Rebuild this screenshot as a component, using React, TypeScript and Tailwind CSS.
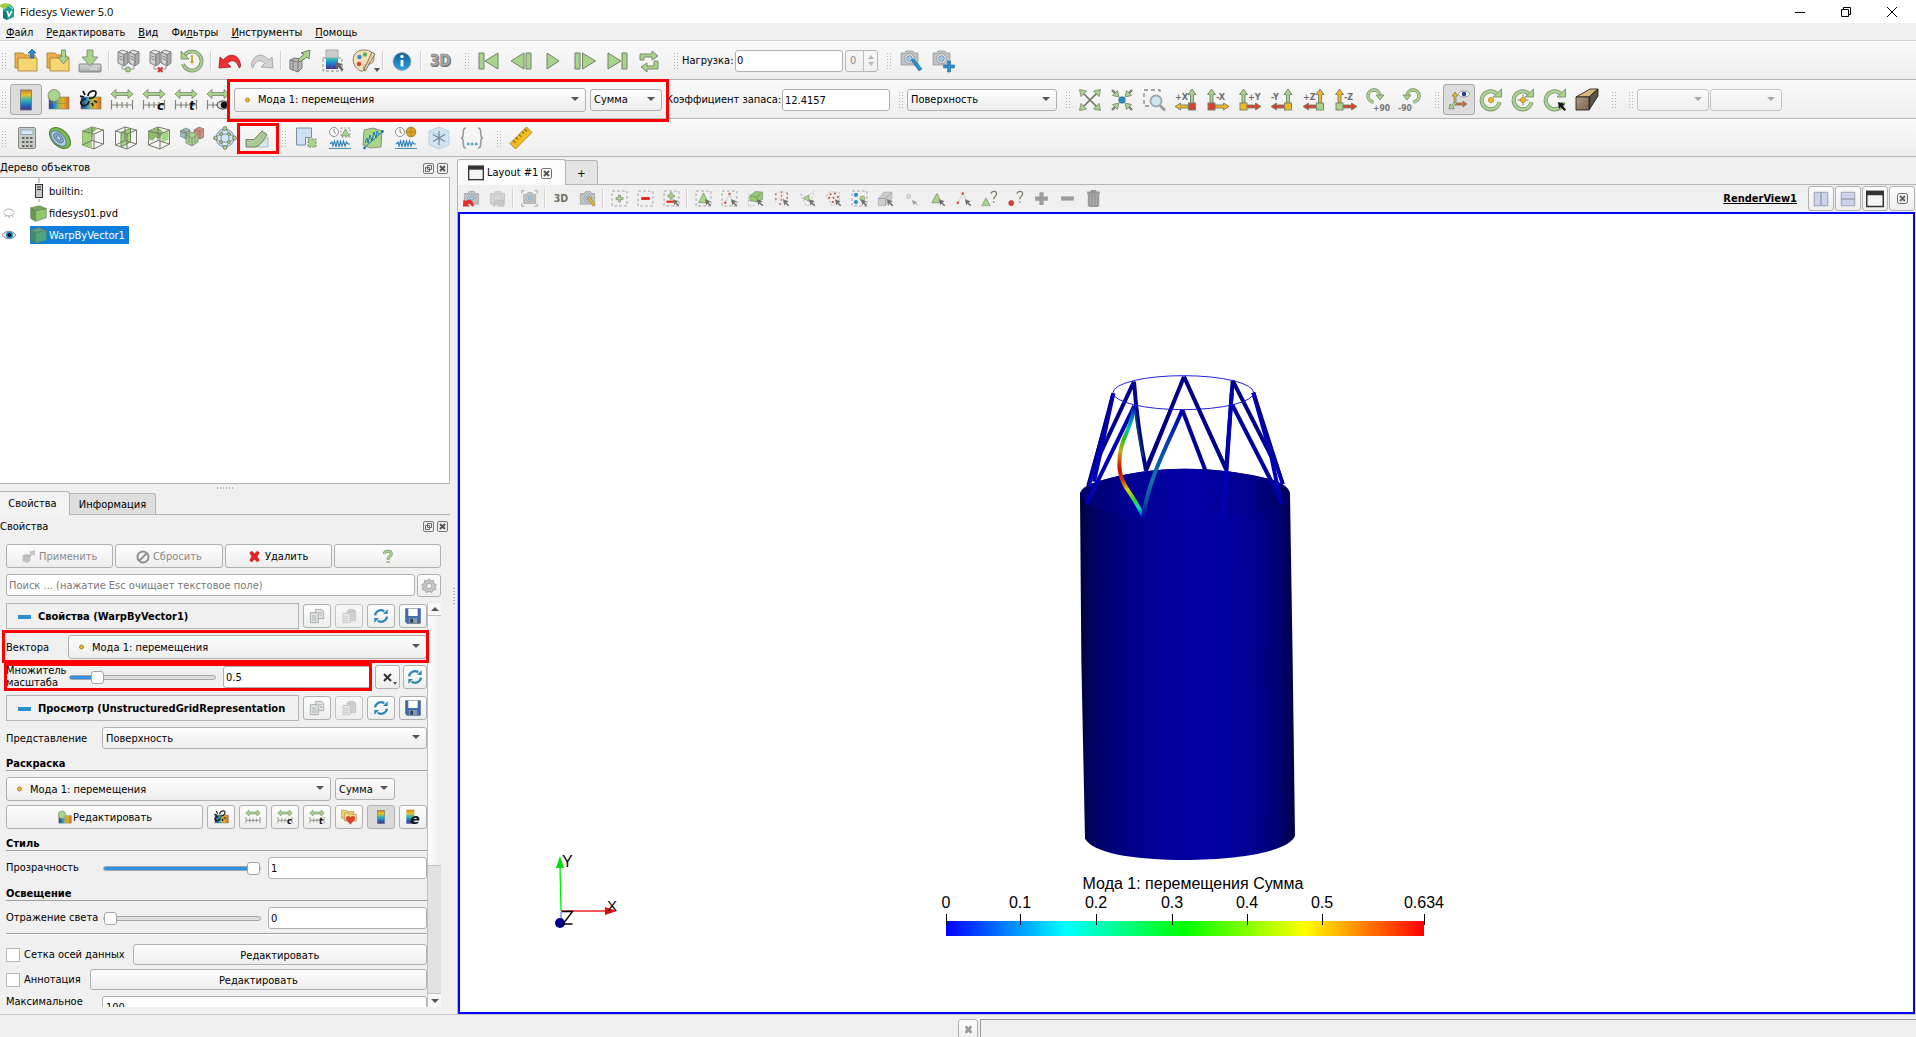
import React from "react";

const G = "#a8d48c";
const S = "#75806a";
const Y = "#f3b61f";
const R = "#d8412f";
const B = "#2d8fc9";

/* ---------- shared drawing pieces ---------- */

const RainbowDefs = () => (
  <svg className="absolute h-0 w-0" aria-hidden="true">
    <defs>
      <linearGradient id="rbV" x1="0" y1="0" x2="0" y2="1">
        <stop offset="0" stopColor="#d97f1e" />
        <stop offset="0.25" stopColor="#e6c22e" />
        <stop offset="0.5" stopColor="#35b8b4" />
        <stop offset="0.75" stopColor="#1d6fc0" />
        <stop offset="1" stopColor="#4a2c8c" />
      </linearGradient>
      <linearGradient id="rbCool" x1="0" y1="0" x2="0" y2="1">
        <stop offset="0" stopColor="#35c8b4" />
        <stop offset="0.5" stopColor="#1d7fd0" />
        <stop offset="1" stopColor="#4a2c8c" />
      </linearGradient>
      <linearGradient id="rbH" x1="0" y1="0" x2="1" y2="0">
        <stop offset="0" stopColor="#3b2d94" />
        <stop offset="0.3" stopColor="#1c9ac6" />
        <stop offset="0.6" stopColor="#e6c52e" />
        <stop offset="1" stopColor="#dd6a1e" />
      </linearGradient>
      <linearGradient id="metal" x1="0" y1="0" x2="0" y2="1">
        <stop offset="0" stopColor="#d8dadb" />
        <stop offset="1" stopColor="#a5a7a8" />
      </linearGradient>
      <linearGradient id="info" x1="0" y1="0" x2="0" y2="1">
        <stop offset="0" stopColor="#0f5f9c" />
        <stop offset="1" stopColor="#2ba3e0" />
      </linearGradient>
      <linearGradient id="wood" x1="0" y1="0" x2="1" y2="1">
        <stop offset="0" stopColor="#b39a80" />
        <stop offset="1" stopColor="#7d6450" />
      </linearGradient>
    </defs>
  </svg>
);

const Camera = ({ dim = false }: { dim?: boolean }) => (
  <g opacity={dim ? 0.6 : 1}>
    <path d="M2 4h4l1-2h7l1 2h4v12H2z" fill="#bfc1c3" stroke="#999c9e" strokeWidth="0.8" />
    <circle cx="10.500" cy="9.500" r="4.800" fill="#e8eaeb" stroke="#8a8e90" strokeWidth="0.8" />
    <circle cx="10.500" cy="9.500" r="2.800" fill={dim ? "#d5d5d5" : "#a3cde6"} stroke="#58879f" strokeWidth="0.8" />
  </g>
);

const BigCamera = ({ dim = false }: { dim?: boolean }) => (
  <g opacity={dim ? 0.6 : 1}>
    <path d="M2 5h5l2-3h7l2 3h4v15H2z" fill="#bfc1c3" stroke="#999c9e" />
    <circle cx="12.500" cy="11.500" r="5.500" fill="#e8eaeb" stroke="#8a8e90" />
    <circle cx="12.500" cy="11.500" r="3.200" fill={dim ? "#d5d5d5" : "#a3cde6"} stroke={dim ? "#999" : "#58879f"} />
  </g>
);

const Server = ({ x }: { x: number }) => (
  <g transform={`translate(${x} 0)`} stroke="#777" strokeWidth="0.9">
    <path d="M1 3l6 2.500V17l-6-3z" fill="#cfd1d2" />
    <path d="M7 5.500L11 3v11l-4 3z" fill="#a9abac" />
    <path d="M1 3l4-2 6 2-4 2.500z" fill="#e4e5e6" />
    <path d="M2.200 7l3.500 1.500M2.200 9.500l3.500 1.500" fill="none" />
  </g>
);

const WireCube = ({ children }: { children?: React.ReactNode }) => (
  <g strokeLinejoin="round">
    <path d="M1.500 5L11 1l11.500 3v14L13 23 1.500 19z" fill="#f4f4f2" stroke="#77776a" />
    {children}
    <path d="M1.500 5L13 8l9.500-4M13 8v15M11 1v13.500L1.500 19M11 14.500l11.500 3.500" fill="none" stroke="#77776a" />
  </g>
);

const SolidCube = ({ front, side, top }: { front: string; side: string; top: string }) => (
  <g stroke="#63805a" strokeWidth="0.9" strokeLinejoin="round">
    <path d="M1 4l7 4v15l-7-4z" fill={side} />
    <path d="M8 8l15-3v13L8 23z" fill={front} />
    <path d="M1 4l12-3 10 4-15 3z" fill={top} />
  </g>
);

const Ruler = ({ mark }: { mark?: string }) => (
  <g>
    <path d="M1 6l5-4.500v3h12v-3L23 6l-5 4.500v-3H6v3z" fill={G} stroke={S} strokeWidth="0.8" />
    <path d="M1.500 12v9.500M22.500 12v9.500M1.500 17h21M7 14v6M12 14v6M17 14v6" stroke="#85857a" strokeWidth="1.200" fill="none" />
    {mark && (
      <text x="15" y="22" fontSize="12" fontWeight="bold" fontStyle="italic" fill="#111" fontFamily="DejaVu Sans">
        {mark}
      </text>
    )}
  </g>
);

const ColorMap = () => (
  <g>
    <rect x="3" y="9" width="20" height="12" fill="url(#rbH)" stroke="#777" strokeWidth="0.6" />
    <path d="M3 15c6-1 13 2 20-1M15 9v12" stroke="#8a7d45" fill="none" strokeWidth="0.6" />
  </g>
);

const DashBox = () => <rect x="1.500" y="1.500" width="21" height="21" fill="none" stroke="#999" strokeWidth="1.200" strokeDasharray="4 3" />;
const Pick = () => <path d="M14 13l8 3-3 1.500 4 4-1.500 1.500-4-4L16 22z" fill="#6e6e6e" />;

const AxisIcon = ({ label, left, up, side, sq }: { label: string; left: boolean; up: string; side: string; sq: string }) => (
  <g strokeWidth="0.9" stroke={S}>
    {left ? (
      <>
        <path d="M18 1l4 5.500h-2.500V15h-3V6.500H14z" fill={up} />
        <path d="M1 18.500L6.500 15v2H14v3H6.500v2z" fill={side} />
        <rect x="14.500" y="15" width="7" height="7" fill={sq} />
      </>
    ) : (
      <>
        <path d="M5.500 1l4 5.500H7V15H4V6.500H1.500z" fill={up} />
        <path d="M23 18.500L17.500 15v2H9v3h8.500v2z" fill={side} />
        <rect x="2" y="15" width="7" height="7" fill={sq} />
      </>
    )}
    <text x={left ? 1 : 10} y="11.500" fontSize="9" fontWeight="bold" stroke="none" fill="#6d6d6d" fontFamily="DejaVu Sans Condensed">
      {label}
    </text>
  </g>
);

const RotateFull = () => (
  <g>
    <path d="M20.500 14a9 9 0 1 1-3-8.500" fill="none" stroke={S} strokeWidth="4" />
    <path d="M14 9h8.500V1z" fill={G} stroke={S} strokeWidth="0.8" />
    <path d="M20.500 14a9 9 0 1 1-3-8.500" fill="none" stroke={G} strokeWidth="2.600" />
  </g>
);

const Waves = () => (
  <g>
    <path d="M2 18l2-2 1 4 1.500-5 1.500 6 1.500-7 1.500 7 1.500-6 1.500 5 1.500-5 1.500 5 1.500-4 1.500 2h2" fill="none" stroke="#2b7fb5" strokeWidth="1.100" />
    <path d="M1 22.500h22" stroke="#4d90b8" />
    <circle cx="6" cy="6" r="4.500" fill="#fff" stroke="#8a9297" />
    <path d="M6 3v3l2 1.500" fill="none" stroke="#777" />
  </g>
);

const Heads = ({ d, fill = G }: { d: string; fill?: string }) => <path d={d} fill={fill} stroke={S} strokeWidth="0.8" />;

const ICONS: Record<string, React.ReactNode> = {
  treeCube: <SolidCube front="#8fc868" side="#6b9450" top="#79a85b" />,
  treeCubeSel: <SolidCube front="#4fa583" side="#3f8a74" top="#5c9f85" />,
  open: (
    <g stroke="#a07a2c" strokeWidth="0.8">
      <path d="M1 4h8l2 2h10v13H1z" fill="#f0ad4a" />
      <path d="M4 9h19v13H4z" fill="#f6d671" />
      <path d="M18 0l4 4h-2.500v5h-3V4H14z" fill="#2a8bd0" stroke="#22669a" />
    </g>
  ),
  load: (
    <g stroke="#a07a2c" strokeWidth="0.8">
      <path d="M1 4h8l2 2h9v13H1z" fill="#f0ad4a" />
      <path d="M4 9h19v13H4z" fill="#f6d671" />
      <path d="M15.500 1h4v7h3.500l-5.500 7-5.500-7h3.500z" fill={G} stroke={S} />
    </g>
  ),
  save: (
    <g>
      <rect x="1" y="15" width="22" height="8" rx="1" fill="url(#metal)" stroke="#808385" />
      <path d="M12 20h7" stroke="#eee" />
      <path d="M9 1h6v7h5l-8 9-8-9h5z" fill={G} stroke={S} strokeWidth="0.8" />
    </g>
  ),
  connect: (
    <g>
      <Server x={1} />
      <Server x={12} />
      <path d="M6 17v3h12v-3" fill="none" stroke="#999" />
      <circle cx="12" cy="20.500" r="2.600" fill={G} stroke={S} strokeWidth="0.8" />
    </g>
  ),
  disconnect: (
    <g>
      <Server x={1} />
      <Server x={12} />
      <path d="M6 17v3h12v-3" fill="none" stroke="#999" />
      <path d="M10 18.500l4.500 4.500m0-4.500L10 23" stroke="#c93030" strokeWidth="2" />
    </g>
  ),
  history: (
    <g fill="none">
      <path d="M4 7a9.500 9.500 0 1 1-1 8" stroke={S} strokeWidth="3.600" />
      <path d="M4 7a9.500 9.500 0 1 1-1 8" stroke={G} strokeWidth="2.200" />
      <path d="M1 2v8h8z" fill={G} stroke={S} strokeWidth="0.8" />
      <path d="M12 6v7" stroke="#caa21a" strokeWidth="1.800" />
      <circle cx="12" cy="13" r="1.600" fill="#caa21a" />
    </g>
  ),
  undo: <path d="M1 19l1-11 3.500 3C10 4 21 4 22.500 16c0 3-1.500 4-2 1.500C18 10 12 11 9.500 14.500L13 18z" fill="#ef3030" stroke="#8d1d1d" strokeWidth="0.8" />,
  redo: <path d="M23 19L22 8l-3.500 3C14 4 3 4 1.500 16c0 3 1.500 4 2 1.500C6 10 12 11 14.500 14.500L11 18z" fill="#d2d2d2" stroke="#9c9c9c" strokeWidth="0.8" />,
  extract: (
    <g>
      <path d="M2 11l4-2 8 1v9l-4 4-8-3z" fill="#b7b7b7" stroke="#777" />
      <path d="M2 11l8 2 4-3M10 13v10M5 12v9" fill="none" stroke="#777" />
      <path d="M10 11l6-6-3-1 9-3-1 9-2-2-7 5z" fill={G} stroke={S} />
    </g>
  ),
  select: (
    <g>
      <rect x="3" y="9" width="19" height="13" fill="none" stroke="#888" strokeDasharray="3 2" />
      <rect x="6" y="1" width="12" height="8" fill="#cdcdcd" stroke="#999" strokeWidth="0.8" />
      <rect x="6" y="9" width="12" height="11" fill="url(#rbCool)" />
      <path d="M15 13l8 2-2.500 1.500 3 4-1.500 1.500-4-4L16 20z" fill="#666" />
    </g>
  ),
  palette: (
    <g>
      <path d="M13 1C4 0-1 8 2 15c2 5 7 8 9 7s-1-5 3-6c5-1 8-2 8-7S18 1 13 1z" fill="#f5dfb8" stroke="#8a7a60" />
      <circle cx="7.500" cy="8" r="2.200" fill={B} />
      <circle cx="13" cy="5.500" r="2.200" fill="#5fb157" />
      <circle cx="7" cy="15" r="2.200" fill={R} />
      <path d="M20 3l3 2-6 10-3 6-2 1 1-4 3-6z" fill="#e5d6b0" stroke="#6b5b3d" strokeWidth="0.8" />
    </g>
  ),
  info: (
    <g>
      <circle cx="12" cy="12.500" r="9" fill="url(#info)" stroke="#aaa" strokeWidth="0.8" />
      <path d="M12 11v6.500" stroke="#fff" strokeWidth="2.800" />
      <circle cx="12" cy="7.500" r="1.700" fill="#fff" />
    </g>
  ),
  threeD: (
    <g fontSize="15" fontWeight="bold" fontFamily="DejaVu Sans Condensed">
      <text x="3" y="18" fill="#6f6f6f">
        3D
      </text>
      <text x="2" y="17" fill="#a9a9a9" stroke="#7d7d7d" strokeWidth="0.6">
        3D
      </text>
    </g>
  ),
  threeDSmall: (
    <text x="1" y="17" fontSize="15" fontWeight="bold" fill="#707064" fontFamily="DejaVu Sans Condensed">
      3D
    </text>
  ),
  first: (
    <g fill={G} stroke={S}>
      <path d="M2 4h5v16H2zM21 4v16L8 12z" />
    </g>
  ),
  prev: (
    <g fill={G} stroke={S}>
      <path d="M15 4v16L2 12zM17 4h5v16h-5z" />
    </g>
  ),
  play: <path d="M6 4v16l12-8z" fill={G} stroke={S} />,
  next: (
    <g fill={G} stroke={S}>
      <path d="M2 4h5v16H2zM9.500 4v16l13-8z" />
    </g>
  ),
  last: (
    <g fill={G} stroke={S}>
      <path d="M3 4v16l13-8zM17 4h5v16h-5z" />
    </g>
  ),
  loop: (
    <g fill={G} stroke={S} strokeWidth="0.9">
      <path d="M3 11V5h12V2l6 5-6 4V8H7v3z" />
      <path d="M21 12v8H10v3l-6-5 6-4v3h7v-5z" />
    </g>
  ),
  camWrench: (
    <g>
      <Camera />
      <path d="M12 11l8 11 3-2-8-10z" fill={B} stroke="#1f6fa3" strokeWidth="0.6" />
    </g>
  ),
  camPlus: (
    <g>
      <Camera />
      <path d="M16.500 12h3v4h4v3h-4v4h-3v-4h-4v-3h4z" fill={B} stroke="#1f6fa3" strokeWidth="0.6" />
    </g>
  ),
  legend: <rect x="6.500" y="2" width="11" height="20" fill="url(#rbV)" stroke="#6d7480" strokeWidth="0.8" />,
  mapEdit: (
    <g>
      <ColorMap />
      <circle cx="8" cy="7.500" r="6" fill={G} stroke={S} strokeWidth="0.8" />
    </g>
  ),
  mapChain: (
    <g>
      <ColorMap />
      <path d="M8 11c-4 0-7 4-4 6s7-1 7-4M10 8c0-5 8-7 8-3s-4 6-7 5M2 8l4 1M5 3l2 4M16 13l3 1M14 15l1 3" fill="none" stroke="#151515" strokeWidth="1.700" />
    </g>
  ),
  ruler: <Ruler />,
  rulerC: <Ruler mark="c" />,
  rulerT: <Ruler mark="t" />,
  rulerEye: (
    <g>
      <Ruler />
      <ellipse cx="17" cy="17" rx="6" ry="4" fill="#ddd" stroke="#333" />
      <circle cx="18" cy="17" r="3.200" fill="#111" />
    </g>
  ),
  heart: (
    <g>
      <path d="M1 2h7l1 2h10v10H1z" fill="#f6d671" stroke="#a58a3c" />
      <path d="M5 6h7l1 2h10v10H5z" fill="#f9e08a" stroke="#a58a3c" />
      <path d="M14 23l-6-7c-2-5 4-7 6-3 3-4 9-2 6 3z" fill="#e5402f" stroke="#a43022" strokeWidth="0.7" />
    </g>
  ),
  mapE: (
    <g>
      <rect x="2" y="1" width="12" height="21" fill="url(#rbV)" />
      <text x="8" y="22" fontSize="21" fontWeight="bold" fontStyle="italic" fill="#111" fontFamily="DejaVu Sans">
        e
      </text>
    </g>
  ),
  reset: (
    <g>
      <path d="M4 4l16 16M20 4L4 20" stroke="#68725c" strokeWidth="1.600" />
      <Heads d="M1.500 1.500l7 1.500-5.500 5.500zM22.500 1.500L21 8.500 15.500 3zM1.500 22.500L3 15.500 8.500 21zM22.500 22.500L15.500 21 21 15.500z" />
    </g>
  ),
  zoomTo: (
    <g>
      <path d="M2 2l4 4M22 2l-4 4M2 22l4-4M22 22l-4-4" stroke={S} strokeWidth="2.400" />
      <Heads d="M9 9L2.500 7.500l5-5zM15 9l6.500-1.500-5-5zM9 15l-6.500 1.500 5 5zM15 15l6.500 1.500-5 5z" />
      <circle cx="12" cy="12" r="3.200" fill={B} stroke="#21678f" strokeWidth="0.8" />
    </g>
  ),
  zoomBox: (
    <g>
      <path d="M7 18H2V2h16v4" fill="none" stroke="#888" strokeWidth="1.300" strokeDasharray="4 3" />
      <circle cx="14" cy="13" r="5.500" fill="#cfe6f5" stroke="#a0a8ad" strokeWidth="1.800" />
      <path d="M18 17.500l5 5" stroke="#999" strokeWidth="2.600" />
    </g>
  ),
  plusX: <AxisIcon label="+X" left up={G} side={Y} sq={R} />,
  minusX: <AxisIcon label="-X" left={false} up={G} side={Y} sq={R} />,
  plusY: <AxisIcon label="+Y" left={false} up={G} side={R} sq={Y} />,
  minusY: <AxisIcon label="-Y" left up={G} side={R} sq={Y} />,
  plusZ: <AxisIcon label="+Z" left up={Y} side={R} sq={G} />,
  minusZ: <AxisIcon label="-Z" left={false} up={Y} side={R} sq={G} />,
  rotP: (
    <g>
      <path d="M7.500 14A6 6 0 1 1 14 8" fill="none" stroke={S} strokeWidth="3.400" />
      <path d="M7.500 14A6 6 0 1 1 14 8" fill="none" stroke={G} strokeWidth="2.200" />
      <Heads d="M10 7h8l-4 5z" />
      <text x="7" y="23" fontSize="8.500" fontWeight="bold" fill="#777" fontFamily="DejaVu Sans Condensed">
        +90
      </text>
    </g>
  ),
  rotM: (
    <g>
      <path d="M15.500 14A6 6 0 1 0 9 8" fill="none" stroke={S} strokeWidth="3.400" />
      <path d="M15.500 14A6 6 0 1 0 9 8" fill="none" stroke={G} strokeWidth="2.200" />
      <Heads d="M13 7H5l4 5z" />
      <text x="0" y="23" fontSize="8.500" fontWeight="bold" fill="#777" fontFamily="DejaVu Sans Condensed">
        -90
      </text>
    </g>
  ),
  axesEye: (
    <g>
      <Heads d="M8 4l3 4H9v7H7V8H5z" fill={Y} />
      <Heads d="M20 16l-4 3v-2H8v-2h8v-2z" fill="#e8622f" />
      <Heads d="M2 21l1-5 1.500 1.500L8 14l1.500 1.500L6 19l1.500 1.500z" />
      <ellipse cx="17" cy="6" rx="5.500" ry="3" fill="#fff" stroke="#888" strokeWidth="0.8" />
      <circle cx="17" cy="6" r="2.300" fill="#2b3f9c" />
    </g>
  ),
  rotCenter: (
    <g>
      <RotateFull />
      <circle cx="12" cy="12" r="2.600" fill={Y} stroke="#b98d20" strokeWidth="0.8" />
    </g>
  ),
  rotCross: (
    <g>
      <RotateFull />
      <path d="M12 6.500v11M6.500 12h11" stroke={S} />
      <circle cx="12" cy="12" r="2.600" fill={Y} stroke="#b98d20" strokeWidth="0.8" />
    </g>
  ),
  rotPick: (
    <g>
      <RotateFull />
      <path d="M15 14l7 2-2.500 1.500 3.500 4-1.500 1.500-4-4-1.500 2z" fill="#151515" />
    </g>
  ),
  beam: (
    <g stroke="#222" strokeWidth="0.9" strokeLinejoin="round">
      <path d="M1 9L15 1h8l-9 8z" fill="#d8b878" />
      <path d="M14 9l9-8v7l-9 14z" fill="#5d5344" />
      <path d="M1 9h13v13H1z" fill="url(#wood)" />
    </g>
  ),
  calc: (
    <g>
      <rect x="3.500" y="1.500" width="17" height="21" rx="1.500" fill="#c9cbc8" stroke="#85887f" />
      <rect x="6" y="4" width="12" height="4.500" fill="#d4e7f3" stroke="#8aa0ad" strokeWidth="0.8" />
      <path d="M7 12h2.500M11 12h2.500M15 12h2.500M7 16h2.500M11 16h2.500M15 16h2.500M7 20h2.500M11 20h2.500M15 20h2.500" stroke="#65685f" strokeWidth="2.200" />
    </g>
  ),
  contour: (
    <g stroke="#4c7a30">
      <ellipse cx="12" cy="12" rx="12.500" ry="8" transform="rotate(45 12 12)" fill="#79bb4d" />
      <ellipse cx="10.500" cy="12.500" rx="9.500" ry="5.500" transform="rotate(45 10.500 12.500)" fill="#b4cfe2" stroke="#5c7f95" />
      <ellipse cx="10.500" cy="12" rx="6" ry="3.400" transform="rotate(45 10.500 12)" fill="#86acd2" stroke="#44698a" strokeWidth="0.8" />
      <ellipse cx="10.500" cy="12" rx="2.800" ry="1.500" transform="rotate(45 10.500 12)" fill="#c9def0" stroke="#44698a" strokeWidth="0.8" />
    </g>
  ),
  clip: (
    <WireCube>
      <path d="M1.500 5L11 1l6 1.600-6.500 4.900V22L1.500 19z" fill="#8fbe6d" />
      <path d="M1.500 5l9 2.500V22l-9-3z" fill="#9fd07c" />
    </WireCube>
  ),
  slice: (
    <WireCube>
      <path d="M7 6.500l9.500-4V16L7 21z" fill="#9fd07c" stroke="#6d8f55" />
    </WireCube>
  ),
  threshold: (
    <WireCube>
      <path d="M1.500 5L11 1.500l5 4-3 7-5-1-2 3-4.500-1z" fill="#8dbb6d" />
      <path d="M14.500 7.500l7-3v9l-7 3z" fill="#a5d482" />
    </WireCube>
  ),
  extractSet: (
    <g stroke="#777" strokeWidth="0.7">
      <path d="M0 5l6-3 4 2v7l-4 2-6-3z" fill="#8fc3bb" />
      <path d="M14 4l5-3 5 2v8l-4 2-6-2z" fill="#d98d7c" />
      <path d="M6 9l5-3 7 2v8l-6 4-6-3z" fill="#a8d48c" />
      <path d="M6 9l6 3 6-4M12 12v8M0 5l6 2 4-3M14 4l6 2 4-3M6 7v6M20 6v7M9 7v10M15 10v7" fill="none" />
      <path d="M3 4l4 2M16 3l4 2M2 7h4" stroke="#c55" fill="none" />
    </g>
  ),
  glyph: (
    <g fill="none" stroke={S} strokeWidth="0.9">
      <circle cx="12" cy="12" r="9" fill="#d5e6f3" stroke="#68839a" />
      <ellipse cx="12" cy="12" rx="4" ry="9" stroke="#68839a" />
      <ellipse cx="12" cy="12" rx="9" ry="4" stroke="#68839a" />
      <g fill={G}>
        <circle cx="12" cy="2.500" r="1.900" />
        <circle cx="12" cy="21.500" r="1.900" />
        <circle cx="2.500" cy="12" r="1.900" />
        <circle cx="21.500" cy="12" r="1.900" />
        <circle cx="8" cy="8" r="1.500" />
        <circle cx="16" cy="8" r="1.500" />
        <circle cx="8" cy="16" r="1.500" />
        <circle cx="16" cy="16" r="1.500" />
      </g>
    </g>
  ),
  warp: (
    <g strokeLinejoin="round">
      <path d="M12 21l11-10v10z" fill="#d5ebe6" stroke="#9ab" strokeWidth="0.7" />
      <path d="M1 13.500h8L17 5l5 3.500C19 14 16 18 11 21H1z" fill="#abc998" stroke="#71806a" />
    </g>
  ),
  extractSub: (
    <g>
      <path d="M1.500 2h15v9.500h-6V19h-9z" fill="#cfe1f1" stroke="#6f8da6" />
      <rect x="13" y="13" width="8" height="8" fill={G} stroke={S} strokeDasharray="2 1.500" />
    </g>
  ),
  plotSel: (
    <g>
      <Waves />
      <rect x="13" y="2" width="9" height="9" fill="none" stroke="#999" strokeDasharray="2 1.500" />
      <path d="M17.500 3l4 7h-8z" fill={G} stroke={S} strokeWidth="0.7" />
    </g>
  ),
  plotLine: (
    <g>
      <path d="M3 4l9-2 9 3-1 16-11 1-7-3z" fill={G} stroke={S} strokeWidth="0.8" />
      <path d="M4 17l2-5 1 5 2-8 2 6 2-9 2 6 1-7 2 4" fill="none" stroke="#237ab0" />
      <path d="M3 22L22 5" stroke="#237ab0" />
      <circle cx="3.500" cy="22" r="1.400" fill="#237ab0" />
      <circle cx="21.500" cy="5.500" r="1.400" fill="#237ab0" />
    </g>
  ),
  plotTime: (
    <g>
      <Waves />
      <circle cx="17" cy="6" r="4.800" fill="#dba424" stroke="#907020" strokeWidth="0.8" />
      <path d="M12 6h10M17 1.500v9" stroke="#b07e18" strokeWidth="0.8" />
    </g>
  ),
  freeze: (
    <g>
      <path d="M12 1l10 4v14l-10 4-10-4V5z" fill="#d3e5f2" stroke="#b5cbda" strokeWidth="0.8" />
      <path d="M2 5l10 4 10-4M12 9v14" fill="none" stroke="#bdd2e0" />
      <path d="M12 5v14M6 8.500l12 7M18 8.500l-12 7" stroke="#71889a" strokeWidth="1.200" />
    </g>
  ),
  braces: (
    <g fill="none" stroke="#9a9a9a" strokeWidth="1.600">
      <path d="M6 2c-4 0-2 4-3 7 0 2-1 3-2 3 1 0 2 1 2 3 1 3-1 7 3 7M18 2c4 0 2 4 3 7 0 2 1 3 2 3-1 0-2 1-2 3-1 3 1 7-3 7" />
      <path d="M7 18h2.500M11 18h2.500M15 18h2.500" stroke="#4ba3cd" strokeWidth="2.400" />
    </g>
  ),
  measure: (
    <g>
      <path d="M1 17.500L17.500 1 23 6.500 6.500 23z" fill="#f2bd1d" stroke="#9a7a1a" strokeWidth="0.8" />
      <path d="M4 14.500l2.500 2.500M7 11.500l2 2M10 8.500l2.500 2.500M13 5.500l2 2M15.500 3L18 5.500" stroke="#8a6a10" strokeWidth="1.100" />
    </g>
  ),
  camUndo: (
    <g>
      <BigCamera />
      <path d="M0 23l1-9 3 2c4-4 10-2 11 6-1 2-2 1-3 0-1-3-4-4-6-2l3 3z" fill="#ee2b2b" stroke="#a02020" strokeWidth="0.5" />
    </g>
  ),
  camRedo: (
    <g>
      <BigCamera dim />
      <path d="M21 23l-1-9-3 2C13 12 7 14 6 22c1 2 2 1 3 0 1-3 4-4 6-2l-3 3z" fill="#c9c9c9" stroke="#aaa" strokeWidth="0.6" />
    </g>
  ),
  camFrame: (
    <g>
      <g transform="translate(2 2) scale(0.85)">
        <BigCamera />
      </g>
      <path d="M1 5V1h4M19 1h4v4M1 19v4h4M19 23h4v-4" fill="none" stroke="#999" strokeWidth="1.200" />
    </g>
  ),
  camPen: (
    <g>
      <BigCamera />
      <path d="M12 11l8 12 3-2-8-12z" fill="#e5b93a" stroke="#8f7428" strokeWidth="0.8" />
    </g>
  ),
  selPlus: (
    <g>
      <DashBox />
      <path d="M10.500 7h3v3.500H17v3h-3.500V17h-3v-3.500H7v-3h3.500z" fill={G} stroke={S} strokeWidth="0.8" />
    </g>
  ),
  selMinus: (
    <g>
      <DashBox />
      <rect x="6" y="10" width="12" height="4" fill="#e52020" />
    </g>
  ),
  selToggle: (
    <g>
      <DashBox />
      <path d="M10 4h3v3h3v3h-3v3h-3v-3H7V7h3z" fill={G} stroke={S} strokeWidth="0.8" />
      <rect x="5" y="15" width="10" height="3" fill="#e52020" />
      <Pick />
    </g>
  ),
  selCell: (
    <g>
      <DashBox />
      <path d="M12 4l7 14H5z" fill={G} stroke={S} strokeWidth="0.8" />
      <Pick />
    </g>
  ),
  selPoint: (
    <g>
      <DashBox />
      <path d="M12 6l6 12M12 6L6 18" stroke="#bbb" fill="none" />
      <g fill={R}>
        <circle cx="12" cy="5.500" r="1.600" />
        <circle cx="6" cy="18" r="1.600" />
      </g>
      <Pick />
    </g>
  ),
  selFrustC: (
    <g>
      <path d="M4 8l8-6 10 1v10l-8 4-10-2z" fill="#96c873" stroke={S} strokeWidth="0.8" />
      <path d="M4 8l10 2 8-7M14 10v7" stroke={S} fill="none" strokeWidth="0.8" />
      <path d="M2 22V5M3 22h9" stroke="#aaa" strokeDasharray="3 2" />
      <Pick />
    </g>
  ),
  selFrustP: (
    <g>
      <path d="M3 5l9-3 9 2v12l-9 5-9-4zM3 11l9 2 9-2M12 2v19" fill="none" stroke="#ccc" strokeDasharray="3 2" />
      <g fill="#d8655a">
        <circle cx="12" cy="3" r="1.300" />
        <circle cx="4" cy="6" r="1.300" />
        <circle cx="12" cy="8" r="1.300" />
        <circle cx="20" cy="5" r="1.300" />
        <circle cx="4" cy="13" r="1.300" />
        <circle cx="12" cy="14" r="1.300" />
        <circle cx="20" cy="11" r="1.300" />
        <circle cx="10" cy="20" r="1.300" />
      </g>
      <Pick />
    </g>
  ),
  selPolyC: (
    <g>
      <path d="M2 6l8 4 11-8-3 10 4 8-12 2z" fill="none" stroke="#aaa" strokeDasharray="3 2" />
      <path d="M14 7v9l-8-4z" fill={G} stroke={S} strokeWidth="0.8" />
      <Pick />
    </g>
  ),
  selPolyP: (
    <g>
      <path d="M2 8l5-6 14 2-1 12-10 6z" fill="none" stroke="#aaa" strokeDasharray="3 2" />
      <g fill="#b5503a">
        <circle cx="8" cy="6" r="1.500" />
        <circle cx="14" cy="5" r="1.500" />
        <circle cx="6" cy="11" r="1.500" />
        <circle cx="12" cy="11" r="1.500" />
        <circle cx="18" cy="10" r="1.500" />
        <circle cx="11" cy="17" r="1.500" />
      </g>
      <Pick />
    </g>
  ),
  selBlock: (
    <g>
      <DashBox />
      <circle cx="7" cy="7" r="3" fill={B} />
      <circle cx="7" cy="17" r="3" fill={B} />
      <circle cx="16" cy="12" r="3.600" fill={G} stroke={S} strokeWidth="0.8" />
      <Pick />
    </g>
  ),
  interC: (
    <g fill="#cdcdcd" stroke="#999" strokeWidth="0.8">
      <path d="M2 12h10v10H2zM2 12l8-9h11l-9 9zM12 12l9-9v9l-9 10z" />
      <Pick />
    </g>
  ),
  interP: (
    <g>
      <circle cx="8" cy="9" r="3" fill="#dcdcdc" stroke="#aaa" strokeWidth="0.8" />
      <path d="M12 14l8 3-2 1 3 3-1 1-3-3-2 2z" fill="#a0a0a0" />
    </g>
  ),
  hoverC: (
    <g>
      <path d="M11 5l7 13H4z" fill={G} stroke={S} />
      <Pick />
    </g>
  ),
  hoverP: (
    <g>
      <path d="M11 5l7 12M11 5L5 17" stroke="#bbb" fill="none" />
      <g fill={R}>
        <circle cx="11" cy="5" r="1.700" />
        <circle cx="4" cy="18" r="1.700" />
      </g>
      <Pick />
    </g>
  ),
  askC: (
    <g>
      <path d="M7 11l6 11H1z" fill={G} stroke={S} strokeWidth="0.8" />
      <path d="M14 5c1-4 8-4 8 0 0 4-4 4-4 8M18 16v2" stroke={S} strokeWidth="1.800" fill="none" />
    </g>
  ),
  askP: (
    <g>
      <circle cx="6" cy="18.500" r="3.600" fill={R} stroke="#9e3025" strokeWidth="0.8" />
      <path d="M14 5c1-4 8-4 8 0 0 4-4 4-4 8M18 16v2" stroke={S} strokeWidth="1.800" fill="none" />
    </g>
  ),
  plus: <path d="M9 3h6v6h6v6h-6v6H9v-6H3V9h6z" fill="#9c9c9c" />,
  minus: <rect x="3" y="9" width="18" height="6" fill="#9c9c9c" />,
  trash: (
    <g fill="#999">
      <path d="M4 6h16v16l-2 2H6l-2-2z" />
      <path d="M3 2h18v4H3zM8 0h8v2H8z" />
      <path d="M8 8v13M12 8v13M16 8v13" stroke="#b8b8b8" />
    </g>
  ),
  splitH: (
    <g fill="#cdd3ec" stroke="#9a9fa8" strokeWidth="1.300">
      <path d="M3 3h9v18H3zM12 3h9v18h-9z" />
    </g>
  ),
  splitV: (
    <g fill="#cdd3ec" stroke="#9a9fa8" strokeWidth="1.300">
      <path d="M3 3h18v9H3zM3 12h18v9H3z" />
    </g>
  ),
  windowed: (
    <g>
      <rect x="1" y="2" width="22" height="20" fill="#f4f4f4" stroke="#333" strokeWidth="2" />
      <rect x="0" y="1" width="24" height="6" fill="#333" />
    </g>
  ),
  apply: (
    <g fill="#c9c9c9" stroke="#a6a6a6" strokeWidth="0.9">
      <path d="M2 10l5-2 8 2v9l-5 4-8-3z" />
      <path d="M2 10l8 2 5-2M10 12v11M5 11v10" fill="none" />
      <path d="M12 10l5-4-3-2 9-3v9l-3-2-5 4z" />
    </g>
  ),
  ban: (
    <g fill="none" stroke="#8f8f8f" strokeWidth="3.400">
      <circle cx="12" cy="12" r="9.500" />
      <path d="M5.500 18.500l13-13" />
    </g>
  ),
  del: <path d="M3 5l4-3 5 5 5-5 4 3-4 7 4 7-4 3-5-5-5 5-4-3 4-7z" fill="#ea2020" stroke="#8a1a1a" strokeWidth="0.7" />,
  cross: <path d="M3 5l4-3 5 5 5-5 4 3-4 7 4 7-4 3-5-5-5 5-4-3 4-7z" fill="#999" stroke="#777" strokeWidth="0.7" />,
  help: (
    <g>
      <path d="M7 8c0-6 11-6 11 0 0 4-5 4-5 9M13 19.500v3" stroke={S} strokeWidth="4.600" fill="none" />
      <path d="M7 8c0-6 11-6 11 0 0 4-5 4-5 9M13 19.500v3" stroke={G} strokeWidth="3" fill="none" />
    </g>
  ),
  gear: (
    <g fill="none" stroke="#a6a6a6">
      <path d="M12 1l2.500 3.500 4-1L19 8l4 2-2 3.500 1.500 4-4.500.5-2 4-4-2-4 2-2-4-4.500-.5L3 13.500 1 10l4-2 .5-4.500 4 1z" fill="#c4c4c4" strokeWidth="1.400" />
      <circle cx="12" cy="12" r="4" fill="#f0f0f0" strokeWidth="1.400" />
    </g>
  ),
  copy: (
    <g fill="#dfe2e3" stroke="#96999a" strokeWidth="1.100">
      <path d="M10 2h9l3 3v11H10z" />
      <path d="M2 7h9l3 3v12H2z" />
      <path d="M4.500 12h6M4.500 15h7M4.500 18h7M13 7h6M16 10.500h4" stroke="#a5a8a9" />
    </g>
  ),
  paste: (
    <g fill="#c2c2c2" stroke="#acacac" strokeWidth="1.100">
      <path d="M9 4h13v15H9z" />
      <path d="M12 2h7v4h-7z" />
      <path d="M3 8h8l3 3v11H3z" fill="#e4e4e4" />
      <path d="M5 13h6M5 16h6M5 19h6" />
    </g>
  ),
  refresh: (
    <g fill="none" stroke="#2b87b8" strokeWidth="3.400">
      <path d="M3 11a9 9 0 0 1 14-6" />
      <path d="M21 13a9 9 0 0 1-14 6" />
      <path d="M15 9h7V2z" fill="#2b87b8" stroke="none" />
      <path d="M9 15H2v7z" fill="#2b87b8" stroke="none" />
    </g>
  ),
  floppy: (
    <g>
      <path d="M1 1h22v22H3l-2-2z" fill="#3f6fae" stroke="#3a4f6e" />
      <rect x="5" y="1" width="14" height="11" fill="#fff" />
      <rect x="6" y="15" width="12" height="8" fill="#8c97a5" />
      <rect x="8" y="16" width="4" height="6" fill="#2c3e5c" />
    </g>
  ),
};

const Icon = ({ name, size = 24 }: { name: string; size?: number }) => (
  <svg width={size} height={size} viewBox="0 0 24 24" aria-hidden="true" className="shrink-0">
    {ICONS[name]}
  </svg>
);

/* ---------- controls ---------- */

const FACE = "border border-[#b0b0b0] rounded-[3px] bg-linear-to-b from-[#fdfdfd] to-[#eeeeee]";

const Grip = ({ first = false }: { first?: boolean }) => (
  <div
    className={
      "mr-1 h-[17px] w-[5px] shrink-0 bg-[radial-gradient(circle,#b4b4b4_1px,transparent_1px)] bg-size-[3px_3px] " +
      (first ? "ml-px" : "ml-2")
    }
  />
);

const Sep = () => <div className="mx-[2px] h-[19px] w-[2px] shrink-0 border-l border-[#cfcfcf] bg-white" />;

const Tools = ({ names, wide = false, checked }: { names: string[]; wide?: boolean; checked?: string }) => (
  <>
    {names.map((n, i) =>
      n === "|" ? (
        <Sep key={i} />
      ) : (
        <button
          key={i}
          type="button"
          aria-label={n}
          className={
            "flex h-[31px] shrink-0 items-center justify-center rounded-[3px] border " +
            (wide ? "w-[33px] " : "w-8 ") +
            (n === checked ? "border-[#a8a8a8] bg-[#dcdcdc]" : "border-transparent")
          }
        >
          <Icon name={n} />
        </button>
      ),
    )}
  </>
);

const Combo = ({ value, label, box, dot = false, disabled = false }: { value: string; label: string; box: string; dot?: boolean; disabled?: boolean }) => (
  <div className={"relative shrink-0 " + box}>
    <select
      aria-label={label}
      disabled={disabled}
      className={"block h-full w-full appearance-none pt-px text-[11px] text-black outline-none disabled:opacity-70 " + FACE + (dot ? " pl-[23px]" : " pl-[3px]")}
    >
      <option>{value}</option>
    </select>
    {dot && <span className="pointer-events-none absolute top-1/2 left-[11px] size-[5px] -translate-y-1/2 rounded-full border border-[#a98a3a] bg-[#f5b71e]" />}
    <span className={"pointer-events-none absolute top-1/2 right-[7px] -mt-[3px] border-x-4 border-t-4 border-x-transparent " + (disabled ? "border-t-[#a8a8a8]" : "border-t-[#555]")} />
  </div>
);

const Field = ({ value, label, box, placeholder }: { value?: string; label: string; box: string; placeholder?: string }) => (
  <input
    type="text"
    aria-label={label}
    defaultValue={value}
    placeholder={placeholder}
    className={"rounded-[3px] border border-[#b0b0b0] bg-white px-[2px] pt-px text-[11px] text-black outline-none placeholder:text-[#777] " + box}
  />
);

const Slider = ({ value, label, box }: { value: number; label: string; box: string }) => (
  <input
    type="range"
    aria-label={label}
    min={0}
    max={100}
    defaultValue={value}
    style={{ backgroundImage: `linear-gradient(to right, #2b92e8 ${value}%, #dedede ${value}%)` }}
    className={
      "h-[5px] appearance-none rounded-full border border-[#a6a6a6] [&::-webkit-slider-thumb]:size-[13px] [&::-webkit-slider-thumb]:appearance-none [&::-webkit-slider-thumb]:rounded-[3px] [&::-webkit-slider-thumb]:border [&::-webkit-slider-thumb]:border-[#a6a6a6] [&::-webkit-slider-thumb]:bg-white " +
      box
    }
  />
);

const RedFrame = ({ pos }: { pos: string }) => <div className={"pointer-events-none absolute z-20 border-3 border-[#ff0000] " + pos} />;

const CloseBox = () => (
  <button type="button" aria-label="Закрыть" className="grid size-[11px] place-items-center rounded-[2px] border border-[#777]">
    <svg width="7" height="7" viewBox="0 0 7 7" stroke="#555" strokeWidth="2">
      <path d="M1 1l5 5M6 1L1 6" />
    </svg>
  </button>
);

const DockButtons = () => (
  <div className="flex gap-[3px]">
    <button type="button" aria-label="Открепить" className="grid size-[11px] place-items-center rounded-[2px] border border-[#777]">
      <svg width="7" height="7" viewBox="0 0 7 7" fill="none" stroke="#666">
        <path d="M2.500.5h4v4h-4zM.5 2.500h4v4h-4z" />
      </svg>
    </button>
    <CloseBox />
  </div>
);

const SquareButton = ({ icon, dim = false, on = false }: { icon: string; dim?: boolean; on?: boolean }) => (
  <button
    type="button"
    aria-label={icon}
    className={
      "flex h-6 w-7 shrink-0 items-center justify-center " +
      (on ? "rounded-[3px] border border-[#b0b0b0] bg-[#dadada]" : FACE) +
      (dim ? " opacity-70" : "")
    }
  >
    <Icon name={icon} size={16} />
  </button>
);

const Group = ({ title }: { title: string }) => (
  <div className="flex items-center gap-1">
    <button type="button" className="flex h-[26px] min-w-0 flex-1 items-center gap-[7px] overflow-hidden border border-[#b4b4b4] pt-px pl-[11px] text-left font-bold whitespace-nowrap">
      <span className="h-1 w-[13px] shrink-0 bg-[#2d8fc9]" />
      {title}
    </button>
    <SquareButton icon="copy" />
    <SquareButton icon="paste" dim />
    <SquareButton icon="refresh" />
    <SquareButton icon="floppy" />
  </div>
);

const Heading = ({ children }: { children: React.ReactNode }) => (
  <h3 className="flex h-[22px] items-end border-b border-[#a0a0a0] font-bold leading-3">{children}</h3>
);

/* ---------- header ---------- */

const Logo = () => (
  <svg width="16" height="18" viewBox="0 0 16 18" aria-hidden="true">
    <path d="M0 2c4-3 11-2 13 2-4-1-8 0-10 3C3 5 2 4 0 4z" fill="#9ccb3b" />
    <path d="M3 7l7-5 4 3v9l-7 3-4-2z" fill="#1f9e93" />
    <path d="M3 7l4 2v8l-4-2z" fill="#137a74" />
    <path d="M7 8l2 5 3-5" fill="none" stroke="#fff" strokeWidth="1.600" />
    <path d="M9 3l4 3" stroke="#bfe8e0" />
  </svg>
);

const MENU: [string, string, string][] = [
  ["", "Ф", "айл"],
  ["", "Р", "едактировать"],
  ["", "В", "ид"],
  ["Фи", "л", "ьтры"],
  ["", "И", "нструменты"],
  ["", "П", "омощь"],
];

const BAR = "flex shrink-0 items-center border-b border-[#b4b4b4] bg-linear-to-b from-[#fafafa] to-[#eeeeee] pt-px ";

const Header = () => (
  <header className="shrink-0">
    <div className="flex h-[23px] items-center justify-between bg-white pr-[19px]">
      <div className="flex items-center gap-1 pt-px font-['Open_Sans','Noto_Sans',sans-serif] text-[11px]">
        <Logo />
        Fidesys Viewer 5.0
      </div>
      <div className="flex items-center gap-9">
        <button type="button" aria-label="Свернуть">
          <svg width="10" height="10" viewBox="0 0 10 10" stroke="#000"><path d="M0 5.500h10" /></svg>
        </button>
        <button type="button" aria-label="Развернуть">
          <svg width="10" height="10" viewBox="0 0 10 10" stroke="#000" fill="none"><path d="M.5 2.500h7v7h-7zM2.500 2.500v-2h7v7h-2" /></svg>
        </button>
        <button type="button" aria-label="Закрыть окно">
          <svg width="10" height="10" viewBox="0 0 10 10" stroke="#000"><path d="M0 0l10 10M10 0L0 10" /></svg>
        </button>
      </div>
    </div>
    <nav className="flex h-[18px] items-center gap-[13px] border-b border-[#d2d2d2] bg-[#f0f0f0] pt-[2px] pl-[6px]">
      {MENU.map(([a, b, c]) => (
        <button key={b + c} type="button">
          {a}
          <span className="underline underline-offset-1">{b}</span>
          {c}
        </button>
      ))}
    </nav>

    <div className={BAR + "h-[39px]"}>
      <Grip first />
      <Tools names={["open", "load", "save", "|", "connect", "disconnect", "history", "|", "undo", "redo", "|", "extract", "select"]} />
      <div className="relative flex">
        <Tools names={["palette"]} />
        <span className="absolute right-0 bottom-1 border-x-3 border-t-4 border-x-transparent border-t-[#555]" />
      </div>
      <Tools names={["|", "info", "|", "threeD"]} />
      <Grip />
      <Tools names={["first", "prev", "play", "next", "last", "loop"]} />
      <Grip />
      <label htmlFor="load" className="w-[53px] whitespace-nowrap">Нагрузка:</label>
      <input id="load" type="text" defaultValue="0" className="h-[22px] w-[108px] rounded-[3px] border border-[#b0b0b0] bg-white px-px outline-none" />
      <div className="ml-[2px] flex h-[22px] w-[33px] rounded-[3px] border border-[#b8b8b8]">
        <input type="text" aria-label="Шаг" defaultValue="0" className="w-[18px] border-r border-[#c0c0c0] px-1 text-[#888] outline-none" />
        <div className="flex flex-1 flex-col items-center justify-center gap-[3px]">
          <span className="border-x-3 border-b-4 border-x-transparent border-b-[#b8b8b8]" />
          <span className="border-x-3 border-t-4 border-x-transparent border-t-[#b8b8b8]" />
        </div>
      </div>
      <Grip />
      <Tools names={["camWrench", "camPlus"]} />
    </div>

    <div className={BAR + "h-[39px]"}>
      <Grip first />
      <Tools checked="legend" names={["legend", "mapEdit", "mapChain", "ruler", "rulerC", "rulerT", "rulerEye"]} />
      <div className="relative flex items-center gap-1">
        <Combo label="Поле" value="Мода 1: перемещения" box="h-6 w-[352px]" dot />
        <Combo label="Компонента" value="Сумма" box="h-[22px] w-[72px]" />
        <RedFrame pos="-left-[7px] -right-[7px] -top-[9px] -bottom-[10px]" />
      </div>
      <label htmlFor="factor" className="w-[120px] pt-px pl-1 whitespace-nowrap">Коэффициент запаса:</label>
      <input id="factor" type="text" defaultValue="12.4157" className="h-[22px] w-[108px] rounded-[3px] border border-[#b0b0b0] bg-white px-[2px] pt-px outline-none" />
      <Grip />
      <Combo label="Вид отображения" value="Поверхность" box="h-[22px] w-[150px]" />
      <Grip />
      <Tools names={["reset", "zoomTo", "zoomBox", "plusX", "minusX", "plusY", "minusY", "plusZ", "minusZ", "rotP", "rotM"]} />
      <Grip />
      <Tools checked="axesEye" names={["axesEye", "rotCenter", "rotCross", "rotPick", "beam"]} />
      <Grip />
      <Grip />
      <Combo label="Список 1" value="" box="h-[22px] w-[72px]" disabled />
      <Combo label="Список 2" value="" box="ml-px h-[22px] w-[72px]" disabled />
    </div>

    <div className={BAR + "h-[38px]"}>
      <Grip first />
      <Tools wide names={["calc", "contour", "clip", "slice", "threshold", "extractSet", "glyph"]} />
      <div className="relative flex">
        <Tools names={["warp"]} />
        <RedFrame pos="-left-1 -right-[6px] top-0 bottom-0" />
      </div>
      <Grip />
      <Tools wide names={["extractSub", "plotSel", "plotLine", "plotTime", "freeze", "braces"]} />
      <Grip />
      <Tools names={["measure"]} />
    </div>
  </header>
);

/* ---------- left docks ---------- */

const TreeDock = () => (
  <section className="flex min-h-0 flex-1 flex-col">
    <div className="flex h-5 shrink-0 items-center justify-between pt-[2px] pr-[2px]">
      <h2>Дерево объектов</h2>
      <DockButtons />
    </div>
    <ul className="min-h-0 flex-1 overflow-hidden border-y border-r border-[#b4b4b4] bg-white pt-[2px]">
      <li className="flex h-[22px] items-center pl-[34px]">
        <svg width="10" height="22" viewBox="0 0 10 22" className="overflow-visible">
          <path d="M5-2v5M5 19v3" stroke="#999" />
          <rect x="1.500" y="4.500" width="7" height="13" fill="#c9c9c9" stroke="#333" />
          <path d="M3 7h4M3 9.500h4" stroke="#222" />
        </svg>
        <span className="ml-[5px] pt-px">builtin:</span>
      </li>
      <li className="flex h-[22px] items-center">
        <button type="button" aria-label="Показать" className="ml-[3px] w-[27px]">
          <svg width="12" height="10" viewBox="0 0 12 10" fill="none" stroke="#aaa">
            <path d="M.5 4C3 0 9 0 11.500 4M.5 5C3 9 9 9 11.500 5M3 7.500L2 9M6 8v2M9 7.500L10 9" />
          </svg>
        </button>
        <div className="flex h-[18px] items-center gap-[2px] pr-1">
          <Icon name="treeCube" size={17} />
          <span className="pt-px">fidesys01.pvd</span>
        </div>
      </li>
      <li className="flex h-[22px] items-center">
        <button type="button" aria-label="Скрыть" className="ml-[2px] w-7">
          <svg width="14" height="10" viewBox="0 0 14 10">
            <path d="M0 5C3 0 11 0 14 5c-3 5-11 5-14 0z" fill="#dfe6ea" stroke="#8a9197" />
            <circle cx="7.500" cy="5" r="3.600" fill="#1f8fc6" />
            <circle cx="7.500" cy="5" r="2" fill="#111" />
          </svg>
        </button>
        <div className="flex h-[18px] items-center gap-[2px] bg-[#0f7fdc] pr-1 text-white">
          <Icon name="treeCubeSel" size={17} />
          <span className="pt-px">WarpByVector1</span>
        </div>
      </li>
    </ul>
  </section>
);

const PropsDock = () => (
  <section className="shrink-0">
    <div className="flex h-[7px] items-center justify-center">
      <div className="h-[2px] w-[18px] bg-[radial-gradient(circle,#b4b4b4_1px,transparent_1px)] bg-size-[3px_2px]" />
    </div>
    <div role="tablist" className="flex h-6 items-end border-b border-[#b4b4b4]">
      <button type="button" role="tab" aria-selected="true" className="-mb-px h-6 w-[70px] rounded-tr-[3px] border-t border-r border-[#b4b4b4] bg-[#f3f3f3] pt-px pr-1">
        Свойства
      </button>
      <button type="button" role="tab" aria-selected="false" className="h-[21px] w-[86px] rounded-tr-[3px] border-t border-r border-[#b4b4b4] bg-[#dedede] pt-[2px]">
        Информация
      </button>
    </div>
    <div className="flex h-[23px] items-center justify-between pr-[2px]">
      <h2>Свойства</h2>
      <DockButtons />
    </div>

    <div className="flex flex-col gap-[6px] pt-[6px] pr-[9px] pl-[6px]">
      <div className="grid grid-cols-4 gap-[2px]">
        <button type="button" disabled className={"flex h-6 items-center justify-center gap-1 pt-px text-[#8a8a8a] " + FACE}>
          <Icon name="apply" size={13} /> Применить
        </button>
        <button type="button" disabled className={"flex h-6 items-center justify-center gap-[3px] pt-px text-[#8a8a8a] " + FACE}>
          <Icon name="ban" size={14} /> Сбросить
        </button>
        <button type="button" className={"flex h-6 items-center justify-center gap-1 pt-px " + FACE}>
          <Icon name="del" size={13} /> Удалить
        </button>
        <button type="button" aria-label="Справка" className={"flex h-6 items-center justify-center " + FACE}>
          <Icon name="help" size={15} />
        </button>
      </div>
      <div className="flex gap-[2px]">
        <Field label="Поиск" placeholder="Поиск ... (нажатие Esc очищает текстовое поле)" box="h-[22px] flex-1" />
        <button type="button" aria-label="Настройки" className={"grid h-[23px] w-6 place-items-center " + FACE}>
          <Icon name="gear" size={16} />
        </button>
      </div>
    </div>

    <div className="relative mt-[6px] mr-[9px] flex h-[404px] overflow-hidden">
      <div className="min-w-0 flex-1 pl-[6px]">
        <Group title="Свойства (WarpByVector1)" />

        <div className="relative mt-[6px] flex h-6 items-center">
          <span className="w-[62px] shrink-0 pt-px">Вектора</span>
          <Combo label="Вектора" value="Мода 1: перемещения" box="h-6 flex-1 shrink" dot />
          <RedFrame pos="-left-1 -right-[2px] -top-[5px] -bottom-1" />
        </div>

        <div className="mt-[6px] flex h-6 items-center gap-[3px]">
          <div className="relative flex h-6 flex-1 items-center">
            <span className="w-[63px] shrink-0 text-[11px] leading-3">Множитель масштаба</span>
            <Slider label="Множитель масштаба" value={16} box="w-[147px]" />
            <Field label="Значение множителя" value="0.5" box="ml-[7px] h-[22px] w-0 flex-1" />
            <RedFrame pos="-left-[2px] right-0 -top-[2px] -bottom-[2px]" />
          </div>
          <button type="button" aria-label="Сброс масштаба" className={"relative flex h-6 w-[25px] items-center justify-center " + FACE}>
            <svg width="9" height="9" viewBox="0 0 9 9" stroke="#333" strokeWidth="2">
              <path d="M1 1l7 7M8 1L1 8" />
            </svg>
            <span className="absolute right-[2px] bottom-[3px] border-x-2 border-t-3 border-x-transparent border-t-[#555]" />
          </button>
          <button type="button" aria-label="Обновить масштаб" className={"flex h-6 w-6 items-center justify-center " + FACE}>
            <Icon name="refresh" size={16} />
          </button>
        </div>

        <div className="mt-[6px]">
          <Group title="Просмотр (UnstructuredGridRepresentation" />
        </div>

        <div className="mt-[6px] flex items-center">
          <span className="w-[96px] pt-px">Представление</span>
          <Combo label="Представление" value="Поверхность" box="h-[22px] flex-1 shrink" />
        </div>

        <Heading>Раскраска</Heading>
        <div className="mt-[6px] flex items-center gap-1">
          <Combo label="Раскраска" value="Мода 1: перемещения" box="h-6 w-[325px]" dot />
          <Combo label="Компонента раскраски" value="Сумма" box="h-[22px] w-[60px]" />
        </div>
        <div className="mt-1 flex gap-1">
          <button type="button" className={"flex h-6 flex-1 items-center justify-center gap-px pt-px " + FACE}>
            <Icon name="mapEdit" size={15} />
            Редактировать
          </button>
          <SquareButton icon="mapChain" />
          <SquareButton icon="ruler" />
          <SquareButton icon="rulerC" />
          <SquareButton icon="rulerT" />
          <SquareButton icon="heart" />
          <SquareButton icon="legend" on />
          <SquareButton icon="mapE" />
        </div>

        <Heading>Стиль</Heading>
        <div className="mt-[6px] flex items-center">
          <span className="w-[97px]">Прозрачность</span>
          <Slider label="Прозрачность" value={100} box="w-[158px]" />
          <Field label="Значение прозрачности" value="1" box="ml-[7px] h-[22px] w-0 flex-1" />
        </div>

        <Heading>Освещение</Heading>
        <div className="mt-[6px] flex items-center">
          <span className="w-[97px] whitespace-nowrap">Отражение света</span>
          <Slider label="Отражение света" value={0} box="w-[158px]" />
          <Field label="Значение отражения" value="0" box="ml-[7px] h-[22px] w-0 flex-1" />
        </div>

        <div className="mt-1 h-[2px] border-t border-[#a0a0a0] bg-white" />

        <div className="mt-[9px] flex items-center gap-2">
          <label className="flex items-center gap-1">
            <input type="checkbox" className="size-[14px] appearance-none border border-[#b8b8b8] bg-white" />
            <span className="pt-px">Сетка осей данных</span>
          </label>
          <button type="button" className={"h-[21px] flex-1 pt-px leading-none " + FACE}>Редактировать</button>
        </div>
        <div className="mt-1 flex items-center gap-[9px]">
          <label className="flex items-center gap-1">
            <input type="checkbox" className="size-[14px] appearance-none border border-[#b8b8b8] bg-white" />
            <span className="pt-px">Аннотация</span>
          </label>
          <button type="button" className={"h-[21px] flex-1 pt-px leading-none " + FACE}>Редактировать</button>
        </div>
        <div className="mt-[6px] flex items-start">
          <label htmlFor="maxn" className="w-[96px] leading-3">Максимальное</label>
          <input id="maxn" type="text" defaultValue="100" className="h-[22px] w-0 flex-1 rounded-[3px] border border-[#b0b0b0] bg-white px-[3px] pt-px outline-none" />
        </div>
      </div>

      <div className="flex w-[14px] shrink-0 flex-col border-l border-[#c0c0c0]">
        <button type="button" aria-label="Вверх" className="grid h-[13px] place-items-center border-b border-[#c0c0c0] bg-[#f8f8f8]">
          <span className="border-x-4 border-b-4 border-x-transparent border-b-[#555]" />
        </button>
        <div className="h-[249px] bg-linear-to-r from-[#fdfdfd] to-[#eeeeee]" />
        <div className="flex-1 border-y border-[#c0c0c0] bg-[#e2e2e2]" />
        <button type="button" aria-label="Вниз" className="grid h-[13px] place-items-center bg-[#f8f8f8]">
          <span className="border-x-4 border-t-4 border-x-transparent border-t-[#555]" />
        </button>
      </div>
    </div>
    <div className="h-[7px]" />
  </section>
);

/* ---------- render view ---------- */

const TICKS: [string, number][] = [
  ["0", 946],
  ["0.1", 1020],
  ["0.2", 1096],
  ["0.3", 1172],
  ["0.4", 1247],
  ["0.5", 1322],
  ["0.634", 1424],
];

const BACK_STRUTS = ["M222 65L112 300", "M222 65Q232 200 258 332", "M372 50L258 332", "M372 50L498 328", "M518 62L498 330", "M518 62L634 290"];
const FRONT_STRUTS = [
  "M160 100L86 380",
  "M160 100L124 265L102 365",
  "M222 140L80 432",
  "M367 150L490 472",
  "M517 135L668 430",
  "M580 98L668 372",
  "M580 98L634 290L662 425",
  "M515 100L490 472",
];

const Scene = () => (
  <svg viewBox="460 214 1453 798" className="h-full w-full" fontFamily="Liberation Sans, Arial, sans-serif">
    <defs>
      <linearGradient id="bar">
        <stop offset="0" stopColor="#0000ff" />
        <stop offset="0.25" stopColor="#00ffff" />
        <stop offset="0.5" stopColor="#00ff00" />
        <stop offset="0.75" stopColor="#ffff00" />
        <stop offset="1" stopColor="#ff0000" />
      </linearGradient>
      <linearGradient id="body">
        <stop offset="0" stopColor="#000040" />
        <stop offset="0.06" stopColor="#000060" />
        <stop offset="0.2" stopColor="#000084" />
        <stop offset="0.4" stopColor="#00009c" />
        <stop offset="0.6" stopColor="#0000a4" />
        <stop offset="0.8" stopColor="#000094" />
        <stop offset="0.93" stopColor="#000070" />
        <stop offset="1" stopColor="#000048" />
      </linearGradient>
      <linearGradient id="inner">
        <stop offset="0" stopColor="#00006a" />
        <stop offset="0.25" stopColor="#000094" />
        <stop offset="0.55" stopColor="#0000a6" />
        <stop offset="0.8" stopColor="#000090" />
        <stop offset="1" stopColor="#000058" />
      </linearGradient>
      <linearGradient id="hot" gradientUnits="userSpaceOnUse" x1="0" y1="140" x2="0" y2="472">
        <stop offset="0" stopColor="#0010b0" />
        <stop offset="0.1" stopColor="#0a78c8" />
        <stop offset="0.2" stopColor="#10c0a8" />
        <stop offset="0.29" stopColor="#20c018" />
        <stop offset="0.4" stopColor="#c0b010" />
        <stop offset="0.47" stopColor="#d06010" />
        <stop offset="0.56" stopColor="#c81008" />
        <stop offset="0.66" stopColor="#c83808" />
        <stop offset="0.75" stopColor="#e0d010" />
        <stop offset="0.84" stopColor="#30d828" />
        <stop offset="0.92" stopColor="#10d0c8" />
        <stop offset="1" stopColor="#0030b8" />
      </linearGradient>
      <linearGradient id="warm" gradientUnits="userSpaceOnUse" x1="0" y1="150" x2="0" y2="472">
        <stop offset="0" stopColor="#0000a0" />
        <stop offset="0.35" stopColor="#0845b4" />
        <stop offset="0.65" stopColor="#0c78a8" />
        <stop offset="0.85" stopColor="#0850a8" />
        <stop offset="1" stopColor="#0008a0" />
      </linearGradient>
    </defs>

    <g transform="translate(1060 360) scale(0.33333)" fill="none">
      <path d="M60 400C64 386 80 374 120 362C200 338 290 326 375 326C470 326 570 340 640 360C670 372 688 384 690 402L698 900L705 1428C690 1464 590 1496 390 1500C200 1500 100 1476 75 1436L64 900z" fill="url(#body)" />
      <path d="M60 404C64 386 80 374 120 362C200 338 290 326 375 326C470 326 570 340 640 360C670 372 688 384 690 402C680 450 540 478 375 480C200 478 70 450 60 404z" fill="url(#inner)" />
      <path d="M150 460L156 1480M250 474L256 1494M470 476L478 1496M560 464L572 1482" stroke="#000070" strokeOpacity="0.25" strokeWidth="2" />
      <g stroke="#00008c" strokeWidth="12">
        {BACK_STRUTS.map((d) => (
          <path key={d} d={d} />
        ))}
      </g>
      <path d="M225 150Q234 230 250 290" stroke="#053a6c" strokeWidth="6" />
      <ellipse cx="370" cy="98" rx="211" ry="51" stroke="#2020e0" strokeWidth="3" />
      <g stroke="#0000b4" strokeWidth="12">
        {FRONT_STRUTS.map((d) => (
          <path key={d} d={d} />
        ))}
      </g>
      <g stroke="#000078" strokeWidth="4">
        <path d="M584 108L672 372M372 160L486 462M156 108L81 376M522 144L666 424M378 60L500 322M366 60L254 326" />
      </g>
      <path d="M222 136C218 210 178 230 178 312C178 380 222 400 250 472" stroke="url(#hot)" strokeWidth="12" />
      <path d="M367 150C330 240 262 360 250 472" stroke="url(#warm)" strokeWidth="12" />
    </g>

    <g transform="translate(540 840)">
      <path d="M21 71l-1-45" stroke="#00f000" strokeWidth="1.300" />
      <path d="M20 16l4 12h-8z" fill="#00e010" />
      <path d="M21 71h45" stroke="#f02020" strokeWidth="1.300" />
      <path d="M77 71l-12-4v8z" fill="#e01010" />
      <path d="M21 72v9" stroke="#5050ff" />
      <circle cx="20" cy="83" r="5" fill="#000090" />
      <text x="22" y="27" fontSize="16">Y</text>
      <text x="67" y="71" fontSize="15">X</text>
      <path d="M22 71.500h10.500L23 84h9.500" fill="none" stroke="#000" strokeWidth="1.400" />
    </g>

    <text x="1193" y="889" fontSize="16" textAnchor="middle">Мода 1: перемещения Сумма</text>
    <rect x="946" y="921" width="478" height="15" fill="url(#bar)" />
    {TICKS.map(([t, x]) => (
      <g key={t}>
        <path d={`M${x + 0.5} 914v11`} stroke="#000" />
        <text x={x} y="908" fontSize="16" textAnchor="middle">{t}</text>
      </g>
    ))}
  </svg>
);

const VIEW_TOOLS = [
  "camUndo", "camRedo", "|", "camFrame", "|", "threeDSmall", "camPen", "|", "selPlus", "selMinus", "selToggle", "|",
  "selCell", "selPoint", "selFrustC", "selFrustP", "selPolyC", "selPolyP", "selBlock", "interC", "interP", "hoverC",
  "hoverP", "askC", "askP", "plus", "minus", "trash",
];

const RenderPane = () => (
  <section className="flex min-w-0 flex-1 flex-col pt-[2px]">
    <div role="tablist" className="flex h-[26px] shrink-0 items-end border-b border-[#b4b4b4]">
      <div className="-mb-px flex h-[26px] w-[109px] items-center gap-[3px] rounded-t-[3px] border border-b-0 border-[#b4b4b4] bg-[#fbfbfb] pt-px pl-[10px]">
        <Icon name="windowed" size={16} />
        <button type="button" role="tab" aria-selected="true">Layout #1</button>
        <CloseBox />
      </div>
      <button type="button" aria-label="Новая вкладка" className="h-6 w-8 rounded-tr-[3px] border-t border-r border-[#b4b4b4] bg-[#e4e4e4] pt-[2px]">
        +
      </button>
    </div>
    <div className="flex h-[27px] shrink-0 items-center border-l border-[#b4b4b4]">
      {VIEW_TOOLS.map((n, i) =>
        n === "|" ? (
          <Sep key={i} />
        ) : (
          <button key={i} type="button" aria-label={n} className="flex w-[26px] shrink-0 justify-center">
            <Icon name={n} size={17} />
          </button>
        ),
      )}
      <a href="#view" className="mr-[11px] ml-auto pt-px font-bold underline">RenderView1</a>
      <div className="flex gap-px pr-px">
        {["splitH", "splitV", "windowed", ""].map((n) => (
          <button key={n} type="button" aria-label={n || "close"} className={"grid h-[25px] w-[26px] place-items-center " + FACE}>
            {n ? (
              <Icon name={n} size={18} />
            ) : (
              <svg width="11" height="11" viewBox="0 0 11 11" fill="none" stroke="#666">
                <rect x="0.500" y="0.500" width="10" height="10" rx="2" />
                <path d="M3 3l5 5M8 3L3 8" strokeWidth="2" />
              </svg>
            )}
          </button>
        ))}
      </div>
    </div>
    <div id="view" className="mr-px min-h-0 flex-1 border-l border-[#b4b4b4]">
      <div className="h-full border-2 border-[#0000ff] bg-white">
        <Scene />
      </div>
    </div>
  </section>
);

export default function App() {
  return (
    <div className="flex h-screen flex-col overflow-hidden bg-[#f0f0f0] font-['DejaVu_Sans_Condensed','DejaVu_Sans',sans-serif] text-[11px] leading-[14px] text-black">
      <RainbowDefs />
      <Header />
      <main className="flex min-h-0 flex-1">
        <aside className="flex w-[450px] shrink-0 flex-col">
          <TreeDock />
          <PropsDock />
        </aside>
        <div className="flex w-[7px] shrink-0 items-center justify-center pt-5">
          <div className="h-[17px] w-[2px] bg-[radial-gradient(circle,#b4b4b4_1px,transparent_1px)] bg-size-[2px_3px]" />
        </div>
        <RenderPane />
      </main>
      <footer className="flex h-[23px] shrink-0 gap-[2px] border-t border-[#c4c4c4] pt-1">
        <div className="flex-1" />
        <button type="button" aria-label="Остановить" className={"grid h-5 w-5 place-items-center " + FACE}>
          <Icon name="cross" size={9} />
        </button>
        <div className="h-5 w-[936px] max-w-1/2 border-t border-l border-[#999]" />
      </footer>
    </div>
  );
}
